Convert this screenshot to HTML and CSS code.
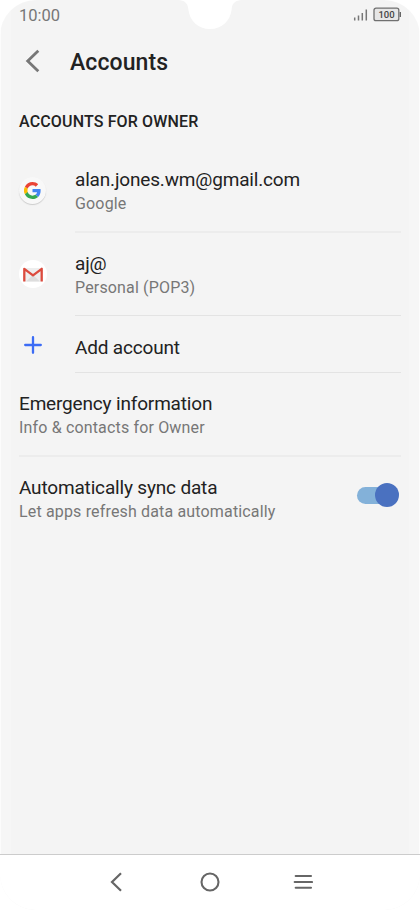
FILE: index.html
```html
<!DOCTYPE html>
<html lang="en">
<head>
<meta charset="utf-8">
<title>Accounts</title>
<link rel="stylesheet" href="styles.css">
</head>
<body>
<div class="phone">
  <svg class="notch" width="64" height="30" viewBox="0 0 64 30"><path d="M0 0H64C57 0 54 4 53.700 9C52.500 21 44 29 32 29S11.500 21 10.300 9C10 4 7 0 0 0Z" fill="#fff"/></svg>
  <header class="status">
    <span class="time">10:00</span>
    <svg width="48" height="16" viewBox="0 0 48 16">
      <path d="M1.700 13.500v-3M5.500 13.500v-5M9.300 13.500v-7.500M13.300 13.500V2.500" stroke="#777" stroke-width="1.500"/>
      <rect x="21" y="1.200" width="24.800" height="12.500" rx="2" fill="#e6e6e6" stroke="#707070" stroke-width="1.300"/>
      <path d="M47.300 5v5" stroke="#666" stroke-width="1.400"/>
      <text class="level" x="33.500" y="11" text-anchor="middle">100</text>
    </svg>
  </header>
  <div class="titlebar">
    <svg class="back" width="16" height="24" viewBox="0 0 16 24"><path d="M13.300 1.700 2.700 12l10.600 10.300" fill="none" stroke="#777" stroke-width="2.800"/></svg>
    <h1>Accounts</h1>
  </div>
  <h2>ACCOUNTS FOR OWNER</h2>
  <main class="list">
    <div class="row">
      <div class="icon">
        <span class="disc google"><svg width="17" height="17" viewBox="0 0 48 48">
          <path fill="#ea4335" d="M24 9.500c3.540 0 6.710 1.220 9.210 3.600l6.850-6.850C35.900 2.380 30.470 0 24 0 14.620 0 6.510 5.380 2.560 13.220l7.980 6.190C12.430 13.720 17.740 9.500 24 9.500z"/>
          <path fill="#4285f4" d="M46.980 24.550c0-1.570-.15-3.090-.38-4.550H24v9.020h12.940c-.58 2.960-2.260 5.480-4.780 7.180l7.730 6c4.510-4.180 7.090-10.360 7.090-17.650z"/>
          <path fill="#fbbc05" d="M10.530 28.590A14.500 14.500 0 0 1 10.530 19.410L2.550 13.220a24 24 0 0 0 0 21.560z"/>
          <path fill="#34a853" d="M24 48c6.480 0 11.930-2.130 15.890-5.810l-7.730-6c-2.150 1.450-4.920 2.300-8.160 2.300-6.260 0-11.570-4.220-13.470-9.910l-7.980 6.190C6.510 42.620 14.620 48 24 48z"/>
        </svg></span>
      </div>
      <div class="text line"><p class="name">alan.jones.wm@gmail.com</p><p class="note">Google</p></div>
    </div>
    <div class="row">
      <div class="icon">
        <span class="disc gmail"><svg width="20" height="15" viewBox="0 0 20 15">
          <path d="M1 1h18v13.500H1z" fill="#eee"/><path d="M3 14.500 10 8l7 6.500z" fill="#ddd"/>
          <path d="M1.300 14.500V1.800L10 8.300l8.700-6.500v12.700" fill="none" stroke="#dc4b3e" stroke-width="2.300" stroke-linejoin="round"/>
        </svg></span>
      </div>
      <div class="text line thin gap"><p class="name">aj@</p><p class="note">Personal (POP3)</p></div>
    </div>
    <div class="row short">
      <div class="icon"><svg class="plus" width="18" height="18" viewBox="0 0 18 18"><path d="M9 1.200v15.600M1.200 9h15.600" stroke="#3c6cf5" stroke-width="2.300" stroke-linecap="round"/></svg></div>
      <div class="text line thin"><p class="name">Add account</p></div>
    </div>
    <div class="row">
      <div class="text line"><p class="name">Emergency information</p><p class="note">Info &amp; contacts for Owner</p></div>
    </div>
    <div class="row">
      <div class="text"><p class="name">Automatically sync data</p><p class="note">Let apps refresh data automatically</p></div>
      <span class="switch"><i></i></span>
    </div>
  </main>
  <nav>
    <svg width="20" height="20" viewBox="0 0 20 20"><path d="m14 1.200-9 8.800 9 8.800" fill="none" stroke="#666" stroke-width="2.200"/></svg>
    <svg width="20" height="20" viewBox="0 0 20 20"><circle cx="10" cy="10" r="8.500" fill="none" stroke="#666" stroke-width="2.100"/></svg>
    <svg width="20" height="20" viewBox="0 0 20 20"><path d="M2.700 4h15.300M1.700 10h17.300M2.700 15.800h15.300" stroke="#666" stroke-width="2.100" stroke-linecap="round"/></svg>
  </nav>
</div>
</body>
</html>
```
FILE: styles.css
```css
* { box-sizing: border-box; margin: 0; }
body { background: #fff; font-family: Roboto, sans-serif; color: #222; }
.phone {
  position: relative;
  display: flex;
  flex-direction: column;
  width: 420px;
  height: 910px;
  border-radius: 36px;
  overflow: hidden;
  background: linear-gradient(90deg, #fcfcfc 1px, #f6f6f6 1px 11px, #f4f4f4 11px 409px, #f6f6f6 409px 419px, #fcfcfc 419px);
}
.notch { position: absolute; left: 178px; top: 0; }
.status {
  display: flex;
  justify-content: space-between;
  align-items: center;
  height: 30px;
  padding: 0 19px 0 19px;
}
.time { font-size: 16.500px; color: #777; }
.level { font-size: 9.500px; font-weight: 500; fill: #444; }
.titlebar { display: flex; align-items: center; height: 64px; padding-left: 25px; }
.back { margin-top: -2px; }
h1 { margin-left: 29px; padding-top: 1px; font-size: 23px; font-weight: 500; letter-spacing: .1px; }
h2 { height: 55px; padding: 16px 0 0 19px; font-size: 16px; line-height: 24px; font-weight: 500; letter-spacing: .15px; white-space: nowrap; }
.row { display: flex; height: 84px; margin: 0 19px; }
.row.short { height: 56px; }
.icon { width: 56px; padding-top: 28px; flex: none; }
.disc { display: flex; align-items: center; justify-content: center; width: 27px; height: 27px; border-radius: 50%; background: #fff; }
.google { background: #f8f8f8; box-shadow: 0 1px 1px #ccc; }
.gmail { width: 28px; height: 28px; margin: -1px 0 0 -.5px; }
.text { flex: 1; padding-top: 19px; white-space: nowrap; }
.line { border-bottom: 2px solid #ececec; }
.thin { border-bottom: 1px solid #e3e3e3; }
.gap { margin-bottom: 1px; }
.name { font-size: 19px; line-height: 24px; letter-spacing: -.17px; }
.note { margin-top: 1px; font-size: 16px; line-height: 22px; letter-spacing: .16px; color: #777; }
.short .icon { padding-top: 19px; }
.plus { display: block; margin-left: 4.500px; }
.short .text { padding-top: 18.500px; }
.switch { position: relative; width: 42px; height: 24px; margin: 26px 2px 0 0; flex: none; }
.switch::before { content: ""; position: absolute; inset: 4px 8px 3px 0; border-radius: 9px; background: #83b1d9; }
.switch i { position: absolute; right: 0; top: 0; width: 24px; height: 24px; border-radius: 50%; background: #4a71c0; }
nav {
  display: flex;
  justify-content: space-between;
  height: 56px;
  margin-top: auto;
  padding: 17px 107px 0;
  border-top: 1px solid #ccc;
  background: #fff;
}
```
